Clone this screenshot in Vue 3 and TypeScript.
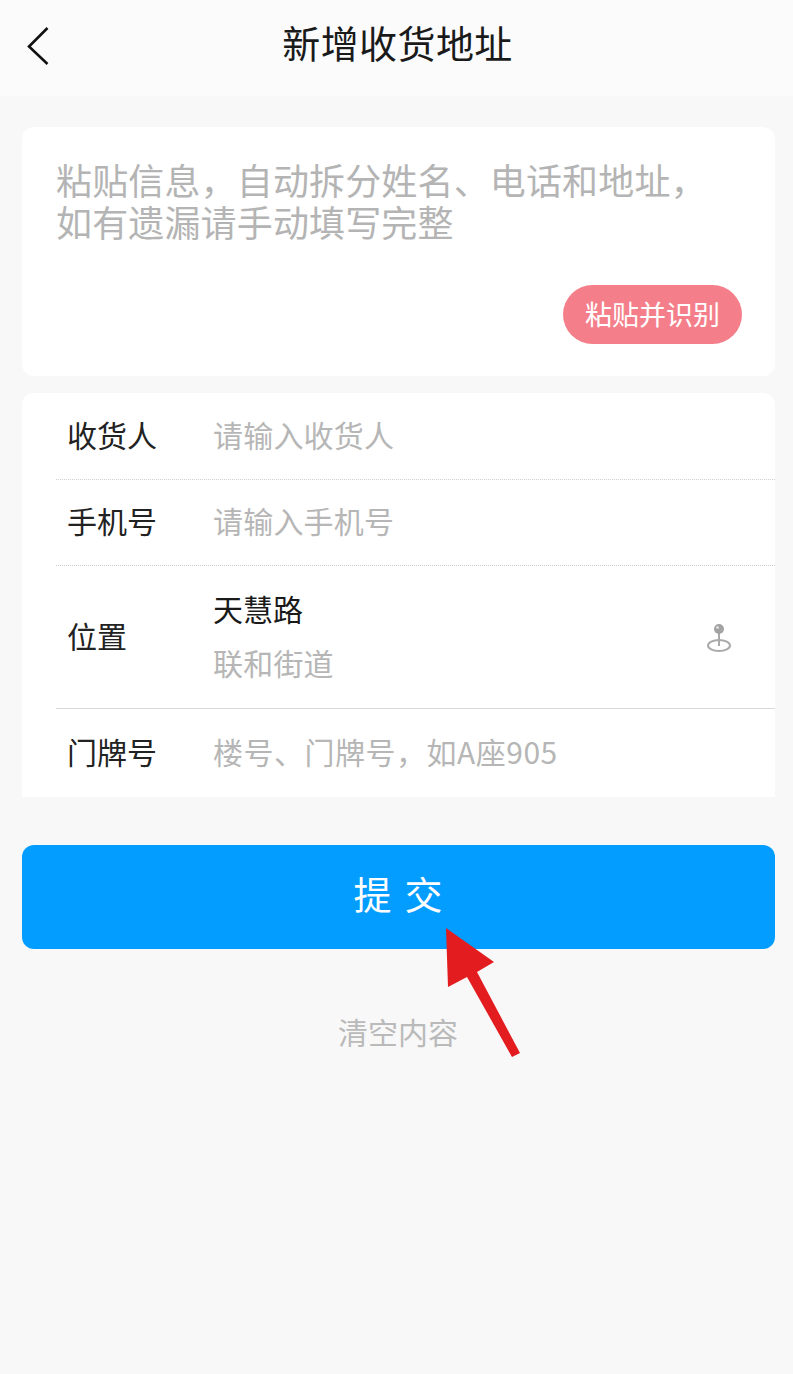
<script setup lang="ts">
interface Row {
  label: string;
  hint?: string;
}

const topRows: Row[] = [
  { label: '收货人', hint: '请输入收货人' },
  { label: '手机号', hint: '请输入手机号' },
];
</script>

<template>
  <div class="page">
    <header class="header">
      <svg class="back" width="26" height="40" viewBox="0 0 26 40">
        <path d="M22.5 2 L4 20.5 L22.5 38" fill="none" stroke="#111" stroke-width="2.6" />
      </svg>
      <span class="title">新增收货地址</span>
    </header>

    <section class="paste-card">
      <p class="paste-text">粘贴信息，自动拆分姓名、电话和地址，<br />如有遗漏请手动填写完整</p>
      <div class="paste-foot">
        <button class="paste-btn">粘贴并识别</button>
      </div>
    </section>

    <section class="form-card">
      <div v-for="row in topRows" :key="row.label" class="row row-dotted">
        <span class="label">{{ row.label }}</span>
        <span class="hint">{{ row.hint }}</span>
      </div>
      <div class="row row-location">
        <span class="label">位置</span>
        <div class="location">
          <span class="street">天慧路</span>
          <span class="hint">联和街道</span>
        </div>
        <svg class="pin" width="26" height="30" viewBox="0 0 26 30">
          <ellipse cx="13" cy="22.5" rx="11" ry="5.5" fill="none" stroke="#a9a9a9" stroke-width="2" />
          <path d="M13 9 V23" stroke="#a9a9a9" stroke-width="2" />
          <circle cx="13" cy="6" r="5" fill="#a3a3a3" />
          <circle cx="11.5" cy="4.5" r="1.3" fill="#e8e8e8" />
        </svg>
      </div>
      <div class="row row-last">
        <span class="label">门牌号</span>
        <span class="hint hint-long">楼号、门牌号，如A座905</span>
      </div>
    </section>

    <button class="submit">提交</button>
    <div class="clear">清空内容</div>

    <svg class="arrow" width="84" height="136" viewBox="0 0 84 136">
      <path d="M2 2 L4 61 L23 51 L68 131 L76 127 L33 46 L50 36 Z" fill="#e31c1f" />
    </svg>
  </div>
</template>

<style scoped>
.page {
  position: relative;
  width: 793px;
  height: 1374px;
  overflow: hidden;
  background: #f8f8f9;
  font-family: "Noto Sans CJK SC", "Noto Sans", sans-serif;
}

.header {
  display: flex;
  align-items: center;
  justify-content: center;
  position: relative;
  height: 96px;
  padding: 0 0 12px 2px;
  box-sizing: border-box;
  background: #fbfbfb;
}

.back {
  position: absolute;
  left: 25px;
  top: 26px;
}

.title {
  font-size: 38px;
  line-height: 46px;
  letter-spacing: 0.4px;
  color: #1a1a1a;
}

.paste-card {
  display: flex;
  flex-direction: column;
  height: 249px;
  box-sizing: border-box;
  margin: 31px 18px 0 22px;
  padding: 31px 33px 32px 34px;
  background: #fff;
  border-radius: 12px;
}

.paste-text {
  margin: 0;
  font-size: 36px;
  line-height: 42px;
  letter-spacing: 0.15px;
  color: #b4b4b4;
}

.paste-foot {
  display: flex;
  justify-content: flex-end;
  margin-top: auto;
}

.paste-btn {
  width: 179px;
  height: 59px;
  padding: 0 0 2px;
  border: 0;
  border-radius: 30px;
  background: #f47f8b;
  color: #fff;
  font-family: inherit;
  font-size: 27px;
}

.form-card {
  margin: 17px 18px 0 22px;
  padding-left: 34px;
  background: #fff;
  border-radius: 12px 12px 0 0;
}

.row {
  display: flex;
  align-items: center;
  height: 87px;
  padding-bottom: 5px;
  box-sizing: border-box;
  font-size: 30px;
}

.row-dotted {
  border-bottom: 1px dotted #cfcfcf;
}

.row-dotted + .row-dotted {
  height: 86px;
}

.row-location {
  height: 143px;
  border-bottom: 1px solid #d8d8d8;
}

.row-last {
  height: 88px;
}

.label {
  flex: 0 0 157px;
  padding-left: 11px;
  box-sizing: border-box;
  color: #222;
}

.hint {
  letter-spacing: 0.2px;
  color: #b6b6b6;
}

.hint-long {
  letter-spacing: 0.5px;
}

.location {
  display: flex;
  flex-direction: column;
  gap: 18px;
  flex: 1;
  line-height: 36px;
}

.street {
  color: #1a1a1a;
}

.pin {
  margin: 7px 43px 0 0;
}

.submit {
  display: block;
  width: 753px;
  height: 104px;
  margin: 48px 0 0 22px;
  padding: 0 0 10px 12px;
  border: 0;
  border-radius: 12px;
  background: #039cff;
  color: #fff;
  font-family: inherit;
  font-size: 38px;
  letter-spacing: 13px;
}

.clear {
  margin-top: 62px;
  padding-left: 3px;
  text-align: center;
  font-size: 30px;
  line-height: 40px;
  color: #bababa;
}

.arrow {
  position: absolute;
  left: 444px;
  top: 926px;
}
</style>
